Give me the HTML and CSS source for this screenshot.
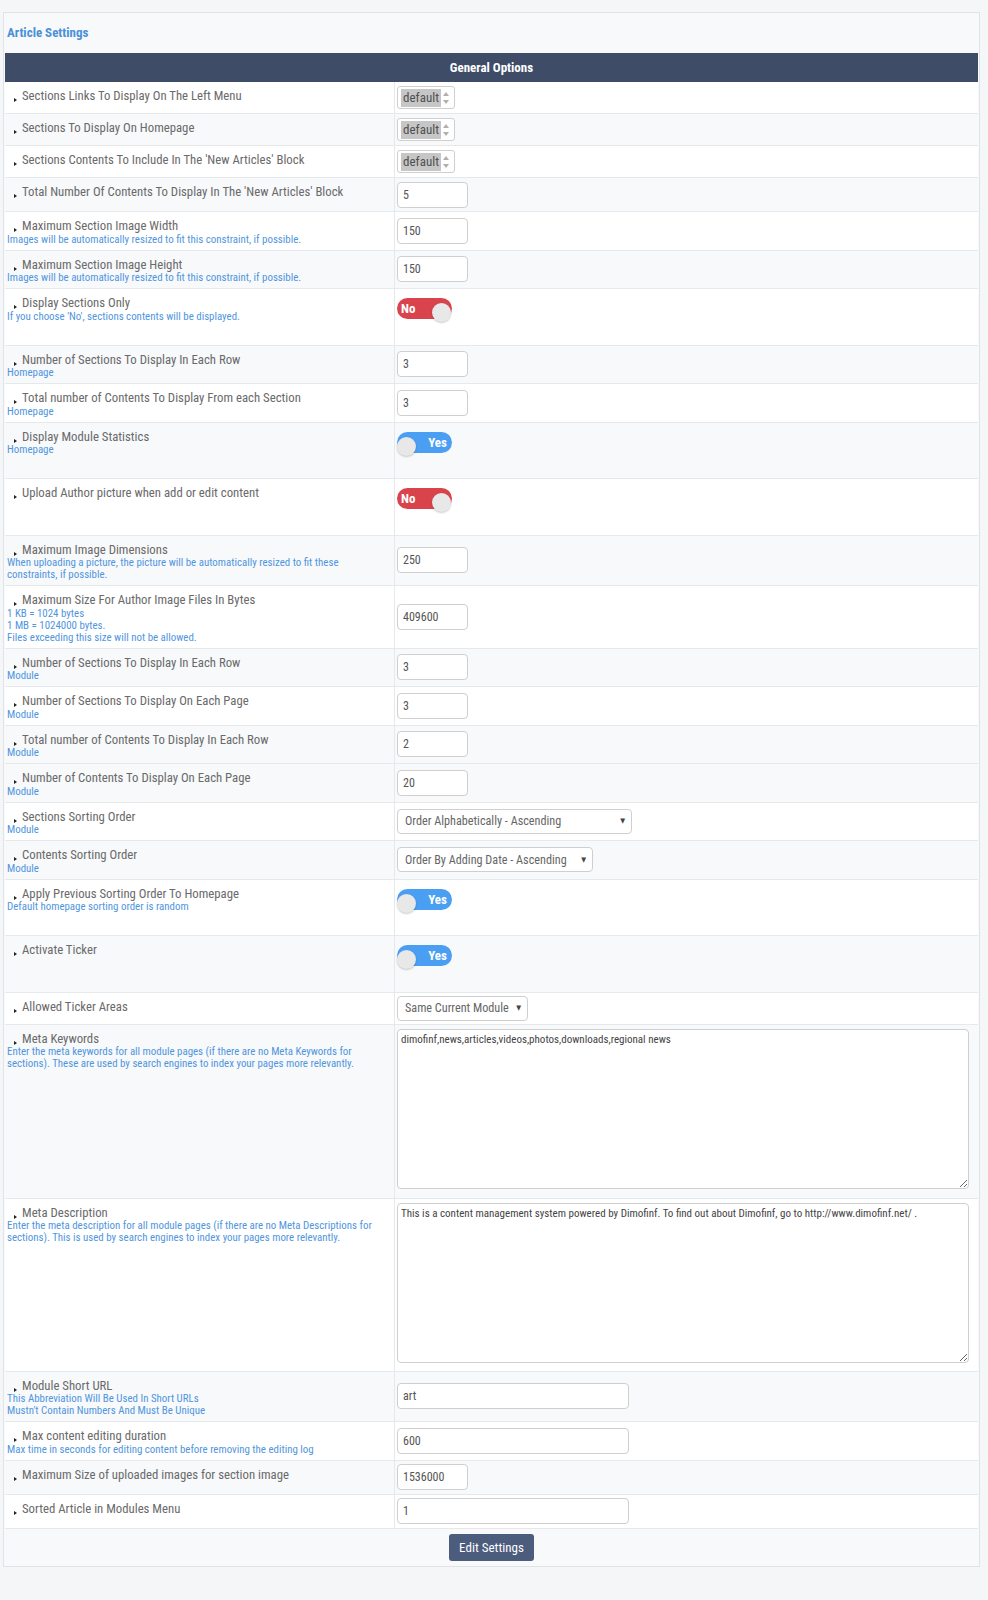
FILE: index.html
```html
<!DOCTYPE html>
<html>
<head>
<meta charset="utf-8">
<title>Article Settings</title>
<link rel="stylesheet" href="styles.css">
</head>
<body>
<div class="page">
  <div class="panel">
    <div class="title">Article Settings</div>
    <div class="head">General Options</div>

    <div class="row">
      <div class="lab"><div class="name">Sections Links To Display On The Left Menu</div></div>
      <div class="ctl sp"><div class="spin"><span class="opt">default</span><span class="arr"><i class="up"></i><i class="dn"></i></span></div></div>
    </div>
    <div class="row alt">
      <div class="lab"><div class="name">Sections To Display On Homepage</div></div>
      <div class="ctl sp"><div class="spin"><span class="opt">default</span><span class="arr"><i class="up"></i><i class="dn"></i></span></div></div>
    </div>
    <div class="row">
      <div class="lab"><div class="name">Sections Contents To Include In The 'New Articles' Block</div></div>
      <div class="ctl sp"><div class="spin"><span class="opt">default</span><span class="arr"><i class="up"></i><i class="dn"></i></span></div></div>
    </div>
    <div class="row alt">
      <div class="lab"><div class="name">Total Number Of Contents To Display In The 'New Articles' Block</div></div>
      <div class="ctl"><input class="inp" type="text" value="5"></div>
    </div>
    <div class="row">
      <div class="lab"><div class="name">Maximum Section Image Width</div><div class="help">Images will be automatically resized to fit this constraint, if possible.</div></div>
      <div class="ctl"><input class="inp" type="text" value="150"></div>
    </div>
    <div class="row alt">
      <div class="lab"><div class="name">Maximum Section Image Height</div><div class="help">Images will be automatically resized to fit this constraint, if possible.</div></div>
      <div class="ctl"><input class="inp" type="text" value="150"></div>
    </div>
    <div class="row">
      <div class="lab"><div class="name">Display Sections Only</div><div class="help">If you choose 'No', sections contents will be displayed.</div></div>
      <div class="ctl tg"><div class="tog no"><span>No</span><i></i></div></div>
    </div>
    <div class="row alt">
      <div class="lab"><div class="name">Number of Sections To Display In Each Row</div><div class="help">Homepage</div></div>
      <div class="ctl"><input class="inp" type="text" value="3"></div>
    </div>
    <div class="row">
      <div class="lab"><div class="name">Total number of Contents To Display From each Section</div><div class="help">Homepage</div></div>
      <div class="ctl"><input class="inp" type="text" value="3"></div>
    </div>
    <div class="row alt">
      <div class="lab"><div class="name">Display Module Statistics</div><div class="help">Homepage</div></div>
      <div class="ctl tg"><div class="tog yes"><span>Yes</span><i></i></div></div>
    </div>
    <div class="row">
      <div class="lab"><div class="name">Upload Author picture when add or edit content</div></div>
      <div class="ctl tg"><div class="tog no"><span>No</span><i></i></div></div>
    </div>
    <div class="row alt">
      <div class="lab"><div class="name">Maximum Image Dimensions</div><div class="help">When uploading a picture, the picture will be automatically resized to fit these<br>constraints, if possible.</div></div>
      <div class="ctl"><input class="inp" type="text" value="250"></div>
    </div>
    <div class="row">
      <div class="lab"><div class="name">Maximum Size For Author Image Files In Bytes</div><div class="help">1 KB = 1024 bytes<br>1 MB = 1024000 bytes.<br>Files exceeding this size will not be allowed.</div></div>
      <div class="ctl"><input class="inp" type="text" value="409600"></div>
    </div>
    <div class="row alt">
      <div class="lab"><div class="name">Number of Sections To Display In Each Row</div><div class="help">Module</div></div>
      <div class="ctl"><input class="inp" type="text" value="3"></div>
    </div>
    <div class="row">
      <div class="lab"><div class="name">Number of Sections To Display On Each Page</div><div class="help">Module</div></div>
      <div class="ctl"><input class="inp" type="text" value="3"></div>
    </div>
    <div class="row alt">
      <div class="lab"><div class="name">Total number of Contents To Display In Each Row</div><div class="help">Module</div></div>
      <div class="ctl"><input class="inp" type="text" value="2"></div>
    </div>
    <div class="row alt">
      <div class="lab"><div class="name">Number of Contents To Display On Each Page</div><div class="help">Module</div></div>
      <div class="ctl"><input class="inp" type="text" value="20"></div>
    </div>
    <div class="row">
      <div class="lab"><div class="name">Sections Sorting Order</div><div class="help">Module</div></div>
      <div class="ctl"><div class="sel s1">Order Alphabetically - Ascending</div></div>
    </div>
    <div class="row alt">
      <div class="lab"><div class="name">Contents Sorting Order</div><div class="help">Module</div></div>
      <div class="ctl"><div class="sel s2">Order By Adding Date - Ascending</div></div>
    </div>
    <div class="row">
      <div class="lab"><div class="name">Apply Previous Sorting Order To Homepage</div><div class="help">Default homepage sorting order is random</div></div>
      <div class="ctl tg"><div class="tog yes"><span>Yes</span><i></i></div></div>
    </div>
    <div class="row alt">
      <div class="lab"><div class="name">Activate Ticker</div></div>
      <div class="ctl tg"><div class="tog yes"><span>Yes</span><i></i></div></div>
    </div>
    <div class="row">
      <div class="lab"><div class="name">Allowed Ticker Areas</div></div>
      <div class="ctl sm"><div class="sel s3">Same Current Module</div></div>
    </div>
    <div class="row alt">
      <div class="lab"><div class="name">Meta Keywords</div><div class="help">Enter the meta keywords for all module pages (if there are no Meta Keywords for<br>sections). These are used by search engines to index your pages more relevantly.</div></div>
      <div class="ctl ta"><textarea class="area">dimofinf,news,articles,videos,photos,downloads,regional news</textarea></div>
    </div>
    <div class="row">
      <div class="lab"><div class="name">Meta Description</div><div class="help">Enter the meta description for all module pages (if there are no Meta Descriptions for<br>sections). This is used by search engines to index your pages more relevantly.</div></div>
      <div class="ctl ta ta2"><textarea class="area">This is a content management system powered by Dimofinf. To find out about Dimofinf, go to http://www.dimofinf.net/ .</textarea></div>
    </div>
    <div class="row alt">
      <div class="lab"><div class="name">Module Short URL</div><div class="help">This Abbreviation Will Be Used In Short URLs<br>Mustn't Contain Numbers And Must Be Unique</div></div>
      <div class="ctl"><input class="inp wide" type="text" value="art"></div>
    </div>
    <div class="row">
      <div class="lab"><div class="name">Max content editing duration</div><div class="help">Max time in seconds for editing content before removing the editing log</div></div>
      <div class="ctl"><input class="inp wide" type="text" value="600"></div>
    </div>
    <div class="row alt">
      <div class="lab"><div class="name">Maximum Size of uploaded images for section image</div></div>
      <div class="ctl"><input class="inp" type="text" value="1536000"></div>
    </div>
    <div class="row">
      <div class="lab"><div class="name">Sorted Article in Modules Menu</div></div>
      <div class="ctl"><input class="inp wide" type="text" value="1"></div>
    </div>

    <div class="foot"><button class="btn" type="button">Edit Settings</button></div>
  </div>
</div>
</body>
</html>
```

FILE: styles.css
```css
html, body {
  margin: 0;
  padding: 0;
  background: #f4f6f7;
}
body {
  font-family: "Roboto Condensed", "DejaVu Sans Condensed", "Arial Narrow", "Liberation Sans Narrow", Roboto, sans-serif;
  font-stretch: condensed;
  color: #666;
}
.page {
  padding: 12px 0 34px 3px;
}
.panel {
  width: 977px;
  box-sizing: border-box;
  border: 1px solid #e1e4e7;
  background: #f7f9fa;
  padding: 0 1px;
}
.title {
  height: 40px;
  line-height: 40px;
  padding-left: 2px;
  color: #4a90d9;
  font-weight: bold;
  font-size: 13px;
}
.head {
  height: 29px;
  line-height: 29px;
  background: #3e4c67;
  color: #fff;
  font-weight: bold;
  font-size: 13px;
  text-align: center;
}
.row {
  display: grid;
  grid-template-columns: 390px 1fr;
  background: #fff;
  border-bottom: 1px solid #e6e9ec;
}
.row.alt {
  background: #f7f9fb;
}
.lab {
  border-right: 1px solid #e6e9ec;
  padding: 6px 2px 4px;
  white-space: nowrap;
}
.name {
  font-size: 12.75px;
  line-height: 15.5px;
  color: #6a6a6a;
}
.name::before {
  content: "";
  display: inline-block;
  border-left: 3px solid #222;
  border-top: 2.5px solid transparent;
  border-bottom: 2.5px solid transparent;
  margin: 0 5px 0 7px;
  vertical-align: -2px;
}
.help {
  font-size: 10.9px;
  line-height: 12px;
  color: #5096de;
}
.ctl {
  padding: 3.5px 2px;
  display: flex;
  align-items: center;
}
.ctl.sp {
  padding: 4px 2px;
}
.ctl.sm {
  padding: 3px 2px;
}
.ctl.tg {
  align-items: flex-start;
  padding: 9px 2px 0;
  height: 55.5px;
  box-sizing: border-box;
}
.ctl.ta {
  align-items: flex-start;
  padding: 4px 2px 9px;
}
.ctl.ta2 {
  padding-bottom: 8px;
}

/* spinner (select multiple) */
.spin {
  display: flex;
  align-items: center;
  width: 58px;
  height: 23px;
  box-sizing: border-box;
  border: 1px solid #cfcfcf;
  border-radius: 3px;
  background: #fff;
  padding-left: 3px;
}
.opt {
  background: #c6c6c6;
  color: #505050;
  font-size: 13px;
  height: 18px;
  line-height: 18px;
  padding: 0 2px;
}
.arr {
  margin-left: auto;
  margin-right: 5px;
  display: flex;
  flex-direction: column;
  gap: 4px;
}
.arr i {
  display: block;
  width: 0;
  height: 0;
  border-left: 3px solid transparent;
  border-right: 3px solid transparent;
}
.arr .up { border-bottom: 4px solid #b0b0b0; }
.arr .dn { border-top: 4px solid #b0b0b0; }

/* inputs */
.inp {
  width: 71px;
  height: 26px;
  box-sizing: border-box;
  border: 1px solid #cfcfcf;
  border-radius: 4px;
  background: #fff;
  padding: 0 5px;
  font-family: inherit;
  font-stretch: condensed;
  font-size: 12px;
  color: #555;
  margin: 0;
}
.inp.wide {
  width: 232px;
}

/* selects */
.sel {
  display: flex;
  align-items: center;
  justify-content: space-between;
  height: 25px;
  box-sizing: border-box;
  border: 1px solid #cfcfcf;
  border-radius: 4px;
  background: #fff;
  padding: 0 6px 0 7px;
  font-size: 12.2px;
  color: #666;
  white-space: nowrap;
}
.sel::after {
  content: "\25BC";
  font-size: 7px;
  color: #444;
  margin-left: 6px;
}
.s1 { width: 235px; }
.s2 { width: 196px; }
.s3 { width: 131px; }

/* toggles */
.tog {
  position: relative;
  width: 55px;
  height: 21px;
  border-radius: 11px;
  box-sizing: border-box;
  color: #fff;
  font-weight: bold;
  font-size: 13px;
  line-height: 21px;
}
.tog.no {
  background: #d9434b;
  padding-left: 4px;
}
.tog.yes {
  background: #4a9ff2;
  text-align: right;
  padding-right: 5px;
}
.tog i {
  position: absolute;
  top: 5px;
  width: 19px;
  height: 19px;
  border-radius: 50%;
  background: #e8e8e8;
  box-shadow: 0 1px 2px rgba(0, 0, 0, 0.2);
}
.tog.no i { right: 1px; }
.tog.yes i { left: 0; }

/* textareas */
.area {
  display: block;
  width: 572px;
  height: 160px;
  box-sizing: border-box;
  border: 1px solid #cfcfcf;
  border-radius: 4px;
  background: #fff;
  padding: 3px 3px;
  margin: 0;
  font-family: inherit;
  font-stretch: condensed;
  font-size: 11px;
  color: #444;
  resize: vertical;
}

/* footer */
.foot {
  display: flex;
  justify-content: center;
  padding: 5px 0 5px;
  background: #f7f9fb;
}
.btn {
  width: 85px;
  height: 27px;
  background: #4b5c7c;
  border: none;
  border-radius: 3px;
  color: #fff;
  font-family: inherit;
  font-stretch: condensed;
  font-size: 13px;
  padding: 0;
}
```
